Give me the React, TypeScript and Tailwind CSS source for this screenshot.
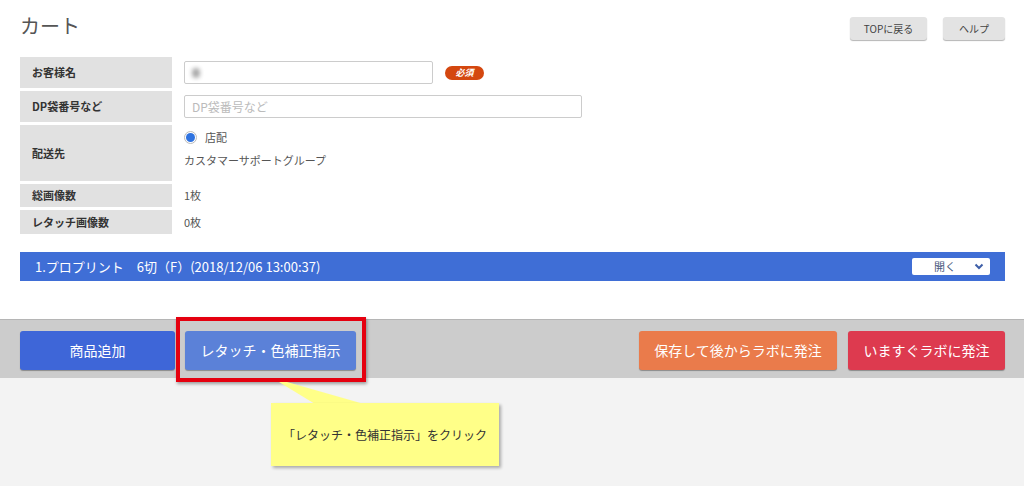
import React from "react";

const font = { fontFamily: '"Noto Sans CJK JP", "Noto Sans", sans-serif' };

function Label({ children, h }: { children: React.ReactNode; h: string }) {
  return (
    <div className={`w-[152px] ${h} bg-[#e1e1e1] flex items-center pl-[12px] text-[11px] font-bold text-[#333] shrink-0`}>
      {children}
    </div>
  );
}

export default function App() {
  return (
    <div className="relative w-[1024px] h-[486px] bg-white flex flex-col overflow-hidden" style={font}>
      {/* header */}
      <div className="flex justify-between items-start pl-[20px] pr-[19px] pt-[12px]">
        <h1 className="text-[20px] leading-[28px] text-[#555] font-normal">カート</h1>
        <div className="flex gap-[16px] mt-[5px]">
          <button className="w-[77px] h-[23px] rounded-[3px] bg-[#e3e3e3] shadow-[0_1px_1px_#b5b5b5] text-[10px] text-[#444]">TOPに戻る</button>
          <button className="w-[62px] h-[23px] rounded-[3px] bg-[#e3e3e3] shadow-[0_1px_1px_#b5b5b5] text-[10px] text-[#444]">ヘルプ</button>
        </div>
      </div>

      {/* table */}
      <div className="mt-[17px] mx-[20px] flex flex-col gap-[3px]">
        <div className="flex">
          <Label h="h-[31px]">お客様名</Label>
          <div className="flex items-center pl-[12px] gap-[12px]">
            <div className="relative w-[249px] h-[23px] border border-[#ccc] rounded-[2px] bg-white">
              <div className="absolute left-[7px] top-[6px] w-[8px] h-[10px] rounded-full bg-[#a9a9a9] blur-[2px]" />
            </div>
            <span className="w-[39px] h-[14px] rounded-full bg-[#d4470f] text-white text-[9px] font-bold italic flex items-center justify-center">必須</span>
          </div>
        </div>
        <div className="flex">
          <Label h="h-[31px]">DP袋番号など</Label>
          <div className="flex items-center pl-[12px]">
            <div className="w-[398px] h-[23px] border border-[#ccc] rounded-[2px] bg-white flex items-center pl-[7px] text-[12px] text-[#bbb]">DP袋番号など</div>
          </div>
        </div>
        <div className="flex">
          <Label h="h-[56px]">配送先</Label>
          <div className="flex flex-col pl-[12px] pt-[4px] text-[11px] text-[#555]">
            <div className="flex items-center gap-[8px] h-[16px]">
              <span className="w-[13px] h-[13px] rounded-full border border-[#bbb] bg-white flex items-center justify-center">
                <span className="w-[9px] h-[9px] rounded-full bg-[#2f73e0]" />
              </span>
              <span>店配</span>
            </div>
            <div className="mt-[7px]">カスタマーサポートグループ</div>
          </div>
        </div>
        <div className="flex">
          <Label h="h-[23px]">総画像数</Label>
          <div className="flex items-center pl-[12px] text-[11px] text-[#555]">1枚</div>
        </div>
        <div className="flex">
          <Label h="h-[24px]">レタッチ画像数</Label>
          <div className="flex items-center pl-[12px] text-[11px] text-[#555]">0枚</div>
        </div>
      </div>

      {/* blue bar */}
      <div className="mt-[18px] ml-[20px] mr-[19px] h-[29px] bg-[#3f6ed6] flex items-center justify-between pl-[15px] pr-[15px]">
        <span className="text-white text-[13px]">1.プロプリント　6切（F）(2018/12/06 13:00:37)</span>
        <div className="w-[78px] h-[17px] bg-white rounded-[2px] flex items-center justify-end pr-[6px] gap-[18px] text-[11px] text-[#4a5a80]">
          <span>開く</span>
          <svg width="10" height="7" viewBox="0 0 10 7">
            <path d="M1.5 1.5 L5 5 L8.5 1.5" fill="none" stroke="#3e5fa8" strokeWidth="2" />
          </svg>
        </div>
      </div>

      {/* footer */}
      <div className="mt-[38px] h-[59px] bg-[#cccccc] border-t border-[#b5b5b5] flex items-start pt-[11px] pl-[20px] pr-[19px]">
        <button className="w-[155px] h-[39px] rounded-[3px] bg-[#3e66d8] text-white text-[14px] shadow-[0_1px_1px_#8a8a8a]">商品追加</button>
        <button className="ml-[10px] w-[171px] h-[39px] rounded-[3px] bg-[#5b81d8] text-white text-[14px] shadow-[0_1px_1px_#8a8a8a]">レタッチ・色補正指示</button>
        <div className="flex-1" />
        <button className="w-[198px] h-[39px] rounded-[3px] bg-[#ea7b4b] text-white text-[14px] shadow-[0_1px_1px_#8a8a8a]">保存して後からラボに発注</button>
        <button className="ml-[11px] w-[157px] h-[39px] rounded-[3px] bg-[#dd3a4f] text-white text-[14px] shadow-[0_1px_1px_#8a8a8a]">いますぐラボに発注</button>
      </div>
      <div className="flex-1 bg-[#f3f3f3]" />

      {/* red highlight */}
      <div className="absolute left-[176px] top-[317px] w-[190px] h-[65px] border-[4px] border-[#e5000f] shadow-[1px_2px_3px_rgba(0,0,0,0.35)]" />

      {/* callout pointer */}
      <svg className="absolute left-0 top-0 pointer-events-none" width="1024" height="486">
        <polygon points="279,382 287,382 364,404 315,404" fill="#ffff88" />
      </svg>
      {/* callout */}
      <div className="absolute left-[271px] top-[403px] w-[228px] h-[63px] bg-[#ffff88] shadow-[2px_2px_3px_rgba(0,0,0,0.3)] flex items-center justify-center text-[12px] text-[#333]">
        「レタッチ・色補正指示」をクリック
      </div>
    </div>
  );
}
